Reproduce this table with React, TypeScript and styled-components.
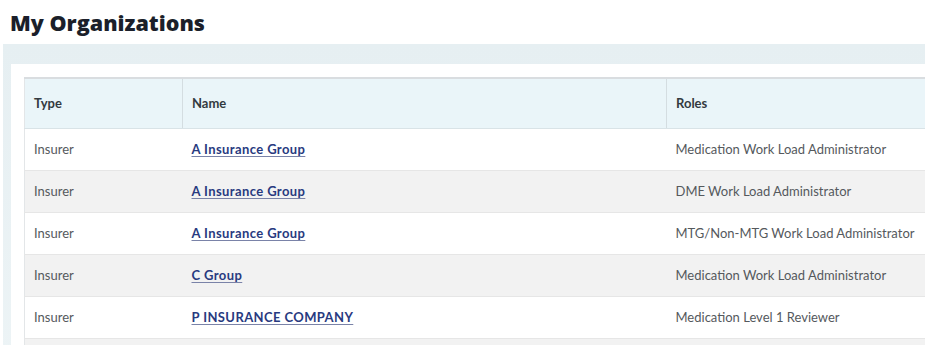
import React from "react";
import styled, { createGlobalStyle } from "styled-components";

const GlobalStyle = createGlobalStyle`
  body {
    margin: 0;
    background: #ffffff;
    font-family: "Lato", "Liberation Sans", Arial, sans-serif;
    overflow: hidden;
  }
`;

const Page = styled.div`
  width: 925px;
  height: 345px;
  overflow: hidden;
`;

const Title = styled.h1`
  margin: 0;
  padding: 8px 0 0 10px;
  height: 44px;
  box-sizing: border-box;
  font-family: "Open Sans", "Liberation Sans", Arial, sans-serif;
  font-size: 21.5px;
  font-weight: 800;
  color: #1b1f2a;
`;

const Panel = styled.div`
  margin-left: 3px;
  padding: 20px 0 0 8px;
  background: linear-gradient(#e6eff2, #edf4f6);
`;

const Card = styled.div`
  background: #ffffff;
  padding: 13px 0 0 13px;
`;

const Table = styled.table`
  border-collapse: collapse;
  width: 920px;
  table-layout: fixed;
  border-left: 1px solid #e3e6e8;
`;

const HeadCell = styled.th<{ $w: number; $divider?: boolean }>`
  width: ${(p) => p.$w}px;
  height: 50px;
  box-sizing: border-box;
  padding: 0 0 0 9px;
  text-align: left;
  font-size: 13px;
  font-weight: 700;
  color: #333a40;
  background: #eaf5f9;
  border-top: 2px solid #d9dde0;
  border-bottom: 1px solid #d9e3e7;
  border-left: ${(p) => (p.$divider ? "1px solid #d4dde1" : "none")};
`;

const Row = styled.tr<{ $alt: boolean }>`
  background: ${(p) => (p.$alt ? "#f2f2f2" : "#ffffff")};
`;

const Cell = styled.td`
  height: 42px;
  box-sizing: border-box;
  padding: 0 0 0 9px;
  font-size: 13px;
  color: #55595d;
  border-bottom: 1px solid #e6e6e6;
  white-space: nowrap;
`;

const OrgLink = styled.a`
  font-weight: 700;
  color: #283a80;
  letter-spacing: 0.4px;
  text-decoration: underline;
  text-underline-offset: 2px;
  text-decoration-color: #7a83a8;
  cursor: pointer;
`;

const rows = [
  { type: "Insurer", name: "A Insurance Group", role: "Medication Work Load Administrator" },
  { type: "Insurer", name: "A Insurance Group", role: "DME Work Load Administrator" },
  { type: "Insurer", name: "A Insurance Group", role: "MTG/Non-MTG Work Load Administrator" },
  { type: "Insurer", name: "C Group", role: "Medication Work Load Administrator" },
  { type: "Insurer", name: "P INSURANCE COMPANY", role: "Medication Level 1 Reviewer" },
];

const App = () => {
  return (
    <Page>
      <GlobalStyle />
      <Title>My Organizations</Title>
      <Panel>
        <Card>
          <Table>
            <thead>
              <tr>
                <HeadCell $w={158}>Type</HeadCell>
                <HeadCell $w={484} $divider>Name</HeadCell>
                <HeadCell $w={278} $divider>Roles</HeadCell>
              </tr>
            </thead>
            <tbody>
              {rows.map((r, i) => (
                <Row key={i} $alt={i % 2 === 1}>
                  <Cell>{r.type}</Cell>
                  <Cell>
                    <OrgLink>{r.name}</OrgLink>
                  </Cell>
                  <Cell>{r.role}</Cell>
                </Row>
              ))}
              <Row $alt>
                <Cell />
                <Cell />
                <Cell />
              </Row>
            </tbody>
          </Table>
        </Card>
      </Panel>
    </Page>
  );
};

export default App;
